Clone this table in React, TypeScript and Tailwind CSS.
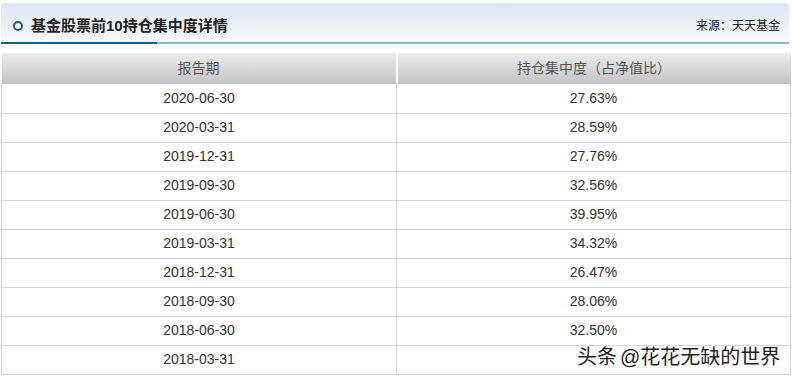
import React from "react";

const ROWS = [
  ["2020-06-30", "27.63%"],
  ["2020-03-31", "28.59%"],
  ["2019-12-31", "27.76%"],
  ["2019-09-30", "32.56%"],
  ["2019-06-30", "39.95%"],
  ["2019-03-31", "34.32%"],
  ["2018-12-31", "26.47%"],
  ["2018-09-30", "28.06%"],
  ["2018-06-30", "32.50%"],
  ["2018-03-31", ""],
];

const FONT = { fontFamily: '"Liberation Sans", Arial, "Noto Sans CJK SC", sans-serif' };

export default function App() {
  return (
    <div className="relative w-[792px] h-[379px] bg-white overflow-hidden text-[#333]" style={FONT}>
      <div className="pt-[3px] pl-[1px] pr-[3px]">
        <div className="h-[41px] pt-[6px] rounded-t-[4px] bg-gradient-to-b from-[#dbe6f2] to-[#f8fafc] flex items-center border-b-2 border-[#8bb8d6] relative">
          <div className="absolute left-0 bottom-[-2px] w-[156px] h-[2px] bg-[#1b5e83]" />
          <span className="ml-[12px] w-[10px] h-[10px] rounded-full border-2 border-[#1b5e83]" />
          <span className="ml-[8px] text-[15px] font-bold text-[#222] leading-none">基金股票前10持仓集中度详情</span>
          <span className="ml-auto mr-[9px] text-[12px] text-[#222] leading-none">来源：天天基金</span>
        </div>
      </div>
      <div className="pt-[9px] pl-[1px] pr-[1px]">
        <table className="w-[790px] border-collapse text-[14px] table-fixed">
          <thead>
            <tr className="h-[31px] bg-gradient-to-b from-[#ececec] to-[#c3c3c3] text-[#555]">
              <th className="font-normal border-r-2 border-white w-[395px]">报告期</th>
              <th className="font-normal">持仓集中度（占净值比）</th>
            </tr>
          </thead>
          <tbody>
            {ROWS.map(([d, p]) => (
              <tr key={d} className="h-[29px]">
                <td className="text-center border border-[#d4d4d4] border-t-0">{d}</td>
                <td className="text-center border border-[#d4d4d4] border-t-0">{p}</td>
              </tr>
            ))}
          </tbody>
        </table>
      </div>
      <div
        className="absolute left-[577px] top-[347px] text-[20px] text-[#222] leading-none flex gap-[3px]"
        style={{ textShadow: "0 0 2px #fff, 0 0 2px #fff, 1px 1px 0 #fff, -1px -1px 0 #fff" }}
      >
        <span>头条</span>
        <span>@花花无缺的世界</span>
      </div>
    </div>
  );
}
